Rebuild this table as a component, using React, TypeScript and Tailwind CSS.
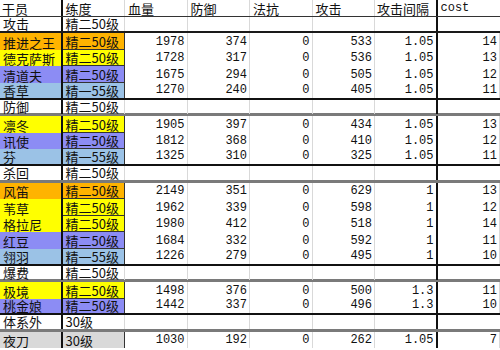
type Member = {
  kind: "member";
  name: string;
  lv: string;
  bg: string;
  hp: number;
  def: number;
  res: number;
  atk: number;
  interval: string;
  cost: number;
  last?: boolean;
};
type Group = { kind: "group"; name: string; lv: string; first?: boolean };
type Row = Member | Group;

const ORANGE = "bg-[#ffb300]";
const YELLOW = "bg-[#ffff00]";
const BLUE = "bg-[#8c8cf4]";
const LIGHT = "bg-[#9bc2e6]";
const GRAY = "bg-[#d9d9d9]";

const rows: Row[] = [
  { kind: "group", name: "攻击", lv: "精二50级", first: true },
  { kind: "member", name: "推进之王", lv: "精二50级", bg: ORANGE, hp: 1978, def: 374, res: 0, atk: 533, interval: "1.05", cost: 14 },
  { kind: "member", name: "德克萨斯", lv: "精二50级", bg: YELLOW, hp: 1728, def: 317, res: 0, atk: 536, interval: "1.05", cost: 13 },
  { kind: "member", name: "清道夫", lv: "精二50级", bg: BLUE, hp: 1675, def: 294, res: 0, atk: 505, interval: "1.05", cost: 12 },
  { kind: "member", name: "香草", lv: "精一55级", bg: LIGHT, hp: 1270, def: 240, res: 0, atk: 405, interval: "1.05", cost: 11, last: true },
  { kind: "group", name: "防御", lv: "精二50级" },
  { kind: "member", name: "凛冬", lv: "精二50级", bg: YELLOW, hp: 1905, def: 397, res: 0, atk: 434, interval: "1.05", cost: 13 },
  { kind: "member", name: "讯使", lv: "精二50级", bg: BLUE, hp: 1812, def: 368, res: 0, atk: 410, interval: "1.05", cost: 12 },
  { kind: "member", name: "芬", lv: "精一55级", bg: LIGHT, hp: 1325, def: 310, res: 0, atk: 325, interval: "1.05", cost: 11, last: true },
  { kind: "group", name: "杀回", lv: "精二50级" },
  { kind: "member", name: "风笛", lv: "精二50级", bg: ORANGE, hp: 2149, def: 351, res: 0, atk: 629, interval: "1", cost: 13 },
  { kind: "member", name: "苇草", lv: "精二50级", bg: YELLOW, hp: 1962, def: 339, res: 0, atk: 598, interval: "1", cost: 12 },
  { kind: "member", name: "格拉尼", lv: "精二50级", bg: YELLOW, hp: 1980, def: 412, res: 0, atk: 518, interval: "1", cost: 14 },
  { kind: "member", name: "红豆", lv: "精二50级", bg: BLUE, hp: 1684, def: 332, res: 0, atk: 592, interval: "1", cost: 11 },
  { kind: "member", name: "翎羽", lv: "精一55级", bg: LIGHT, hp: 1226, def: 279, res: 0, atk: 495, interval: "1", cost: 10, last: true },
  { kind: "group", name: "爆费", lv: "精二50级" },
  { kind: "member", name: "极境", lv: "精二50级", bg: YELLOW, hp: 1498, def: 376, res: 0, atk: 500, interval: "1.3", cost: 11 },
  { kind: "member", name: "桃金娘", lv: "精二50级", bg: BLUE, hp: 1442, def: 337, res: 0, atk: 496, interval: "1.3", cost: 10, last: true },
  { kind: "group", name: "体系外", lv: "30级" },
  { kind: "member", name: "夜刀", lv: "30级", bg: GRAY, hp: 1030, def: 192, res: 0, atk: 262, interval: "1.05", cost: 7 },
];

const cjk = "font-['Noto_Sans_CJK_SC','Noto_Sans',sans-serif] text-[13px] leading-[13px] whitespace-nowrap";
const mono = "font-['Liberation_Mono',monospace] text-[12px] leading-[12px]";

function NumCell({ v, edge }: { v?: string | number; edge?: boolean }) {
  return (
    <div
      className={`flex items-end justify-end pr-[2px] pb-[2px] overflow-hidden ${mono} ${
        edge ? "border-r-2 border-[#111]" : "border-r border-[#d9d9d9]"
      }`}
    >
      {v}
    </div>
  );
}

export default function App() {
  return (
    <div className="w-[500px] h-[350px] overflow-hidden bg-white text-[#111]">
      {/* header */}
      <div className="grid grid-cols-8 h-[16.6px] border-b border-[#333]">
        <div className={`px-[2px] pb-[1px] border-r-2 border-[#111] flex items-end ${cjk}`}>干员</div>
        {["练度", "血量", "防御", "法抗", "攻击"].map((h) => (
          <div key={h} className={`px-[3px] pb-[1px] border-r border-[#d9d9d9] flex items-end ${cjk}`}>
            {h}
          </div>
        ))}
        <div className={`px-[2px] pb-[1px] border-r-2 border-[#111] flex items-end ${cjk}`}>攻击间隔</div>
        <div className={`pl-[3px] pb-[2px] flex items-end ${mono}`}>cost</div>
      </div>

      {rows.map((r, i) =>
        r.kind === "group" ? (
          <div
            key={i}
            className={`grid grid-cols-8 h-[16.6px] ${
              r.first ? "border-b-2 border-[#1a1a1a]" : "border-b-[3px] border-[#7a7a7a]"
            }`}
          >
            <div className={`px-[3px] pb-[1px] border-r-2 border-[#111] flex items-end ${cjk}`}>{r.name}</div>
            <div className={`px-[3px] pb-[1px] border-r border-[#d9d9d9] flex items-end ${cjk}`}>{r.lv}</div>
            <NumCell />
            <NumCell />
            <NumCell />
            <NumCell />
            <NumCell edge />
            <div />
          </div>
        ) : (
          <div
            key={i}
            className={`grid grid-cols-8 h-[16.6px] ${r.last ? "border-b-2 border-[#111]" : ""}`}
          >
            <div className={`px-[3px] pb-[1px] border-r-2 border-[#111] flex items-end ${cjk} ${r.bg}`}>{r.name}</div>
            <div
              className={`px-[3px] pb-[1px] border-r border-[#333] flex items-end ${cjk} ${r.bg} ${
                r.last || r.bg === GRAY ? "" : "border-b border-b-[#333]"
              }`}
            >
              {r.lv}
            </div>
            <NumCell v={r.hp} />
            <NumCell v={r.def} />
            <NumCell v={r.res} />
            <NumCell v={r.atk} />
            <NumCell v={r.interval} edge />
            <NumCell v={r.cost} />
          </div>
        )
      )}
    </div>
  );
}
